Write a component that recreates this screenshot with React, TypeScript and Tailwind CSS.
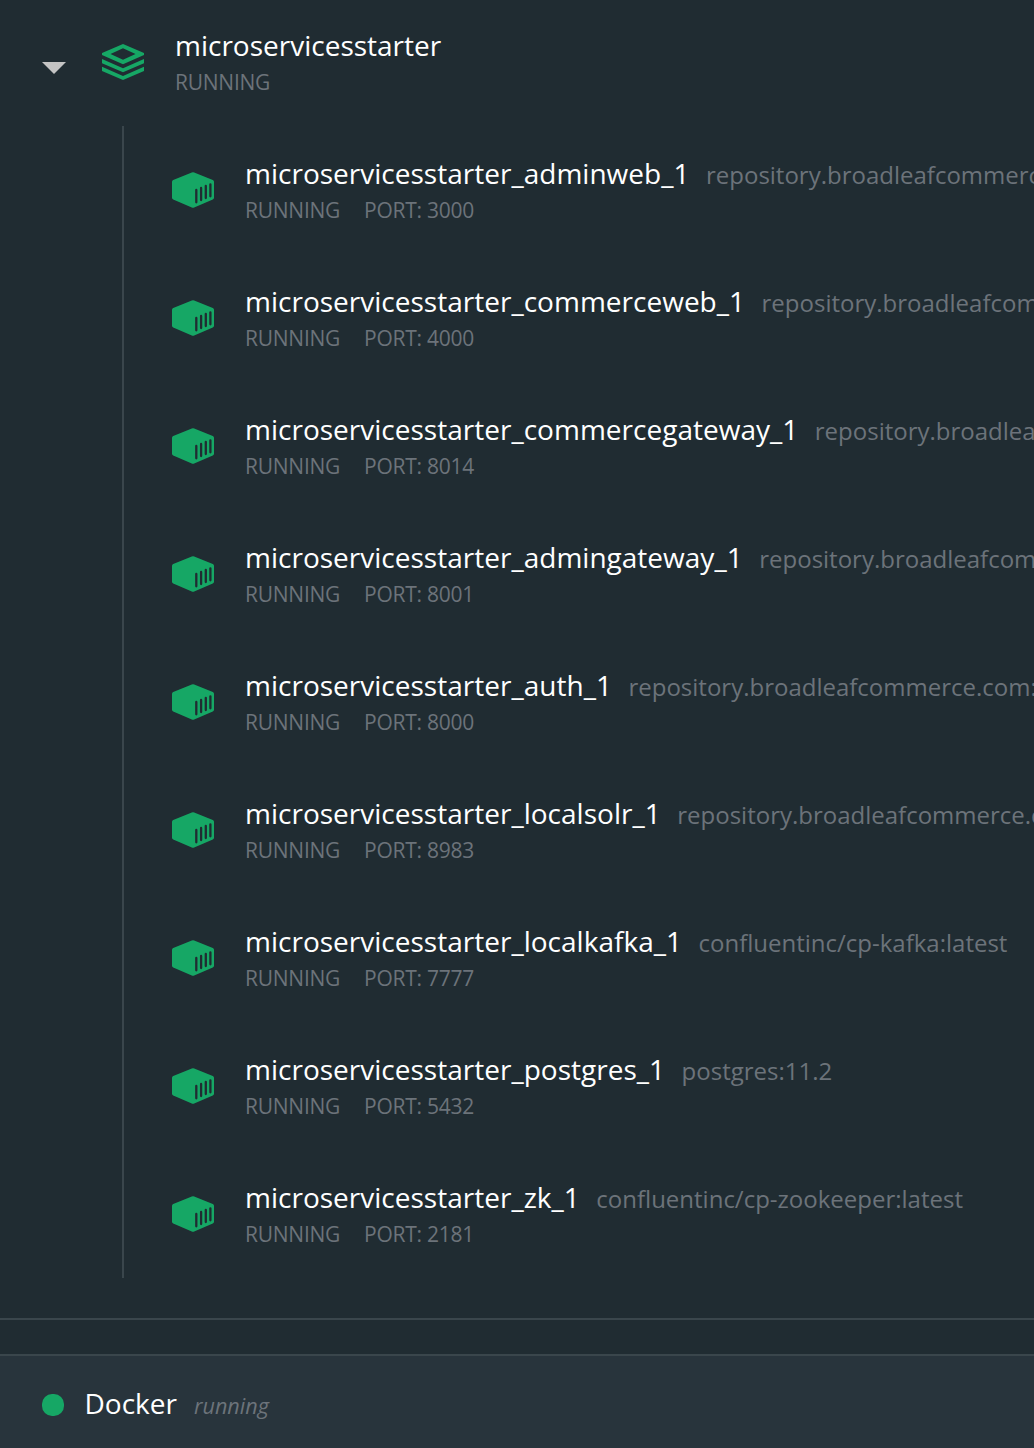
type Service = { name: string; port: number; image: string };

const repo = 'repository.broadleafcommerce.com:5001/broadleaf';

const services: Service[] = [
  { name: 'adminweb', port: 3000, image: repo },
  { name: 'commerceweb', port: 4000, image: repo },
  { name: 'commercegateway', port: 8014, image: repo },
  { name: 'admingateway', port: 8001, image: repo },
  { name: 'auth', port: 8000, image: repo },
  { name: 'localsolr', port: 8983, image: repo },
  { name: 'localkafka', port: 7777, image: 'confluentinc/cp-kafka:latest' },
  { name: 'postgres', port: 5432, image: 'postgres:11.2' },
  { name: 'zk', port: 2181, image: 'confluentinc/cp-zookeeper:latest' },
];

function StackIcon() {
  return (
    <svg className="h-9 w-[42px] shrink-0" viewBox="0 0 42 36" fill="#16a765">
      <path fillRule="evenodd" d="M21 0 42 9v2L21 20.3 0 11V9ZM21 4.2 8.5 10 21 15.8 33.5 10Z" />
      <path d="M0 15 21 24.2 42 15v4.2L21 28.3 0 19.2Z" />
      <path d="M0 22.7 21 31.9 42 22.7v4.2L21 36 0 26.9Z" />
    </svg>
  );
}

function ContainerIcon() {
  return (
    <svg className="h-9 w-[42px] shrink-0" viewBox="0 0 42 36">
      <path
        d="M19.8.4a3 3 0 0 1 2.4 0L40.8 8A2 2 0 0 1 42 9.8V25.7a2 2 0 0 1-1.2 1.8L22.2 35.4a3 3 0 0 1-2.4 0L1.2 27.5A2 2 0 0 1 0 25.7V9.8A2 2 0 0 1 1.2 8Z"
        fill="#16a765"
      />
      <path
        d="M24.3 18v12.3M29.1 16v12M33.8 14v12M38.4 12.3v12"
        stroke="#202c32"
        strokeWidth="2.3"
        strokeLinecap="round"
      />
    </svg>
  );
}

function ServiceRow({ name, port, image }: Service) {
  return (
    <li className="flex h-32 pl-12">
      <div className="mt-[46px] flex h-9 items-center">
        <ContainerIcon />
      </div>
      <div className="ml-[31px] min-w-0 flex-1 overflow-hidden pt-[27px] whitespace-nowrap">
        <div className="flex items-baseline leading-10">
          <span className="text-[28px] tracking-[0.01px] text-white">microservicesstarter_{name}_1</span>
          <span className="ml-[16.5px] text-2xl text-[#6c737a]">{image}</span>
        </div>
        <div className="mt-[3px] flex gap-6 text-[21px] leading-7 tracking-[-0.25px] text-[#6c737a]">
          <span>RUNNING</span>
          <span>PORT: {port}</span>
        </div>
      </div>
    </li>
  );
}

export default function App() {
  return (
    <div className="flex h-[1448px] w-[1034px] flex-col overflow-hidden bg-[#202c32] font-['Open_Sans',sans-serif]">
      <header className="flex h-[126px] shrink-0 pl-[42px]">
        <svg className="mt-[62px] h-3 w-6 shrink-0" viewBox="0 0 24 12" fill="#c4c4c4">
          <path d="M0 0h24L12 12Z" />
        </svg>
        <div className="mt-11 ml-9">
          <StackIcon />
        </div>
        <div className="ml-[31px] pt-[25px]">
          <h1 className="text-[28px] leading-10 text-white">microservicesstarter</h1>
          <p className="mt-[3px] text-[21px] leading-7 tracking-[-0.25px] text-[#6c737a]">RUNNING</p>
        </div>
      </header>
      <ul className="ml-[122px] shrink-0 border-l-2 border-[#3a464c]">
        {services.map((s) => (
          <ServiceRow key={s.name} {...s} />
        ))}
      </ul>
      <div className="h-[42px] shrink-0 border-b-2 border-[#3a464c]" />
      <div className="h-[34px] shrink-0" />
      <footer className="flex grow items-baseline border-t-2 border-[#3a464c] bg-[#28343c] pt-[27px] pl-[42px]">
        <span className="size-[22px] translate-y-[2px] rounded-[10px] bg-[#16a765]" />
        <span className="ml-[20.5px] text-[28px] leading-10 text-white">Docker</span>
        <span className="ml-[17px] text-[21.6px] leading-10 text-[#6c737a] italic">running</span>
      </footer>
    </div>
  );
}
